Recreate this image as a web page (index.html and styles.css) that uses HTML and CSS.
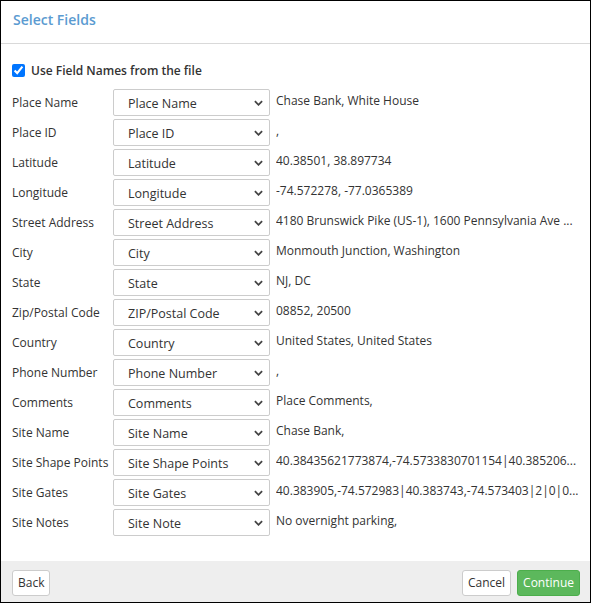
FILE: index.html
```html
<!DOCTYPE html>
<html lang="en">
<head>
  <meta charset="UTF-8" />
  <title>Select Fields</title>
  <link rel="stylesheet" href="styles.css">
</head>
<body>
  <div class="modal">
    <div class="modal-header">Select Fields</div>

    <div class="modal-body">
      <label class="use-names">
        <input type="checkbox" checked>
        Use Field Names from the file
      </label>

      <div class="field-list">
        <div class="field-row">
          <span class="field-label">Place Name</span>
          <span class="select-wrap"><select><option>Place Name</option></select><svg viewBox="0 0 10 6"><path d="M1 1l4 4 4-4"/></svg></span>
          <span class="field-value">Chase Bank, White House</span>
        </div>
        <div class="field-row">
          <span class="field-label">Place ID</span>
          <span class="select-wrap"><select><option>Place ID</option></select><svg viewBox="0 0 10 6"><path d="M1 1l4 4 4-4"/></svg></span>
          <span class="field-value">,</span>
        </div>
        <div class="field-row">
          <span class="field-label">Latitude</span>
          <span class="select-wrap"><select><option>Latitude</option></select><svg viewBox="0 0 10 6"><path d="M1 1l4 4 4-4"/></svg></span>
          <span class="field-value">40.38501, 38.897734</span>
        </div>
        <div class="field-row">
          <span class="field-label">Longitude</span>
          <span class="select-wrap"><select><option>Longitude</option></select><svg viewBox="0 0 10 6"><path d="M1 1l4 4 4-4"/></svg></span>
          <span class="field-value">-74.572278, -77.0365389</span>
        </div>
        <div class="field-row">
          <span class="field-label">Street Address</span>
          <span class="select-wrap"><select><option>Street Address</option></select><svg viewBox="0 0 10 6"><path d="M1 1l4 4 4-4"/></svg></span>
          <span class="field-value">4180 Brunswick Pike (US-1), 1600 Pennsylvania Ave ...</span>
        </div>
        <div class="field-row">
          <span class="field-label">City</span>
          <span class="select-wrap"><select><option>City</option></select><svg viewBox="0 0 10 6"><path d="M1 1l4 4 4-4"/></svg></span>
          <span class="field-value">Monmouth Junction, Washington</span>
        </div>
        <div class="field-row">
          <span class="field-label">State</span>
          <span class="select-wrap"><select><option>State</option></select><svg viewBox="0 0 10 6"><path d="M1 1l4 4 4-4"/></svg></span>
          <span class="field-value">NJ, DC</span>
        </div>
        <div class="field-row">
          <span class="field-label">Zip/Postal Code</span>
          <span class="select-wrap"><select><option>ZIP/Postal Code</option></select><svg viewBox="0 0 10 6"><path d="M1 1l4 4 4-4"/></svg></span>
          <span class="field-value">08852, 20500</span>
        </div>
        <div class="field-row">
          <span class="field-label">Country</span>
          <span class="select-wrap"><select><option>Country</option></select><svg viewBox="0 0 10 6"><path d="M1 1l4 4 4-4"/></svg></span>
          <span class="field-value">United States, United States</span>
        </div>
        <div class="field-row">
          <span class="field-label">Phone Number</span>
          <span class="select-wrap"><select><option>Phone Number</option></select><svg viewBox="0 0 10 6"><path d="M1 1l4 4 4-4"/></svg></span>
          <span class="field-value">,</span>
        </div>
        <div class="field-row">
          <span class="field-label">Comments</span>
          <span class="select-wrap"><select><option>Comments</option></select><svg viewBox="0 0 10 6"><path d="M1 1l4 4 4-4"/></svg></span>
          <span class="field-value">Place Comments,</span>
        </div>
        <div class="field-row">
          <span class="field-label">Site Name</span>
          <span class="select-wrap"><select><option>Site Name</option></select><svg viewBox="0 0 10 6"><path d="M1 1l4 4 4-4"/></svg></span>
          <span class="field-value">Chase Bank,</span>
        </div>
        <div class="field-row">
          <span class="field-label">Site Shape Points</span>
          <span class="select-wrap"><select><option>Site Shape Points</option></select><svg viewBox="0 0 10 6"><path d="M1 1l4 4 4-4"/></svg></span>
          <span class="field-value">40.38435621773874,-74.5733830701154|40.385206...</span>
        </div>
        <div class="field-row">
          <span class="field-label">Site Gates</span>
          <span class="select-wrap"><select><option>Site Gates</option></select><svg viewBox="0 0 10 6"><path d="M1 1l4 4 4-4"/></svg></span>
          <span class="field-value">40.383905,-74.572983|40.383743,-74.573403|2|0|0...</span>
        </div>
        <div class="field-row">
          <span class="field-label">Site Notes</span>
          <span class="select-wrap"><select><option>Site Note</option></select><svg viewBox="0 0 10 6"><path d="M1 1l4 4 4-4"/></svg></span>
          <span class="field-value">No overnight parking,</span>
        </div>
      </div>
    </div>

    <div class="modal-footer">
      <button class="btn">Back</button>
      <span class="spacer"></span>
      <button class="btn">Cancel</button>
      <button class="btn btn-success">Continue</button>
    </div>
  </div>
</body>
</html>
```

FILE: styles.css
```css
body {
  margin: 0;
  padding: 0;
  font-family: "Open Sans", "Liberation Sans", sans-serif;
  font-size: 12px;
  color: #333;
  background: #fff;
}

.modal {
  width: 591px;
  height: 603px;
  box-sizing: border-box;
  border: 1px solid #000;
  display: flex;
  flex-direction: column;
}

.modal-header {
  height: 43px;
  box-sizing: border-box;
  padding: 9px 12px 0;
  border-bottom: 1px solid #d9d9d9;
  color: #5b9bd1;
  font-size: 14px;
  font-weight: 600;
}

.modal-body {
  flex: 1;
  padding: 17px 12px 0 11px;
}

.use-names {
  display: flex;
  align-items: center;
  gap: 6px;
  font-weight: 600;
  height: 18px;
}

.use-names input {
  margin: 0;
  width: 13px;
  height: 13px;
}

.field-list {
  margin-top: 10px;
  display: flex;
  flex-direction: column;
  gap: 3px;
}

.field-row {
  display: grid;
  grid-template-columns: 95px 157px minmax(0, 1fr);
  gap: 6px;
  height: 27px;
}

.field-label {
  align-self: center;
  white-space: nowrap;
}

.select-wrap {
  position: relative;
  display: block;
}

.select-wrap select {
  appearance: none;
  width: 100%;
  height: 27px;
  box-sizing: border-box;
  padding: 2px 24px 0 14px;
  border: 1px solid #ccc;
  border-radius: 2px;
  background: #fff;
  font-family: inherit;
  font-size: 12.5px;
  color: #333;
}

.select-wrap svg {
  position: absolute;
  right: 7px;
  top: 11px;
  width: 9px;
  height: 6px;
  fill: none;
  stroke: #444;
  stroke-width: 2;
  pointer-events: none;
}

.field-value {
  padding-top: 3px;
  white-space: nowrap;
  overflow: hidden;
}

.modal-footer {
  height: 41px;
  box-sizing: border-box;
  background: #eee;
  display: flex;
  align-items: center;
  gap: 6px;
  padding: 2px 10px 0 11px;
}

.spacer {
  flex: 1;
}

.btn {
  height: 26px;
  padding: 0 5px;
  border: 1px solid #ccc;
  border-radius: 3px;
  background: #fff;
  font-family: inherit;
  font-size: 12px;
  color: #333;
}

.btn-success {
  background: #5cb85c;
  border-color: #4cae4c;
  color: #fff;
}
```
